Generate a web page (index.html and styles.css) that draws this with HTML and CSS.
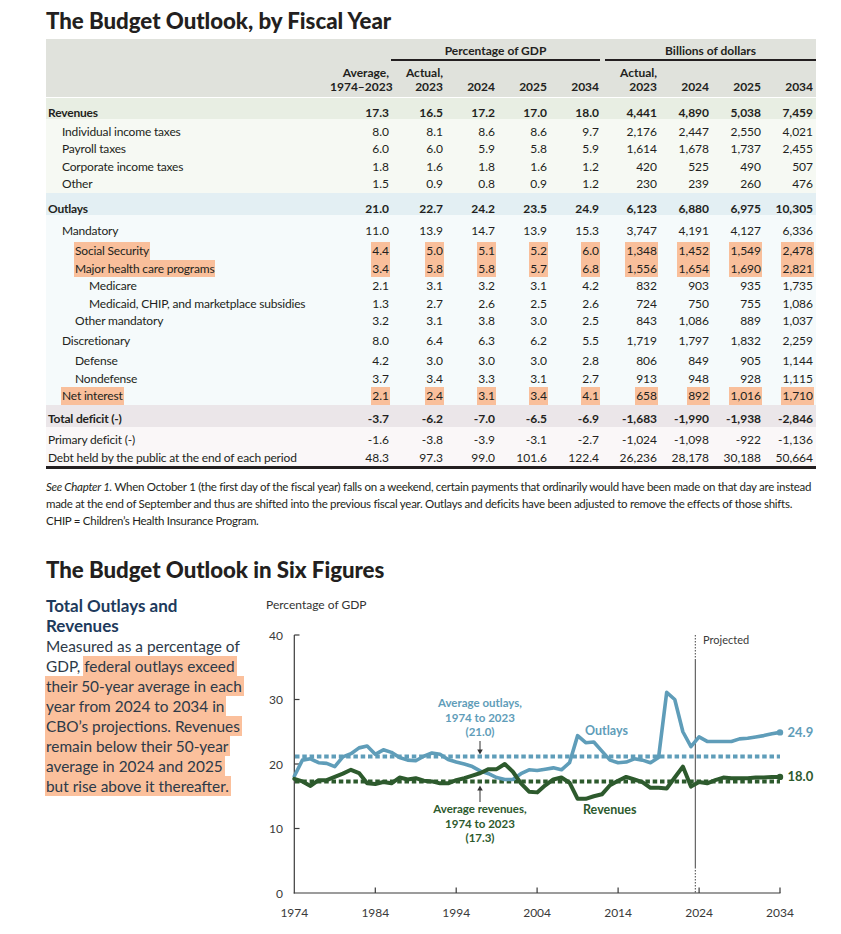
FILE: index.html
```html
<!DOCTYPE html>
<html lang="en">
<head>
<meta charset="utf-8">
<title>The Budget Outlook</title>
<link rel="stylesheet" href="styles.css">
</head>
<body>
<div class="page">
  <h1 class="title">The Budget Outlook, by Fiscal Year</h1>
  <table class="bt">
    <colgroup>
      <col class="c-label"><col class="c-avg"><col class="c-act"><col class="c-y"><col class="c-y"><col class="c-y"><col class="c-act2"><col class="c-y"><col class="c-y"><col class="c-y">
    </colgroup>
    <thead>
      <tr class="h1">
        <th colspan="2"></th>
        <th colspan="4"><div class="grp grp-l">Percentage of GDP</div></th>
        <th colspan="4"><div class="grp grp-r">Billions of dollars</div></th>
      </tr>
      <tr class="h2">
        <th></th>
        <th>Average,<br>1974–2023</th>
        <th>Actual,<br>2023</th>
        <th>2024</th><th>2025</th><th>2034</th>
        <th>Actual,<br>2023</th>
        <th>2024</th><th>2025</th><th>2034</th>
      </tr>
    </thead>
    <tbody class="rev">
      <tr class="band first"><td class="l">Revenues</td><td>17.3</td><td>16.5</td><td>17.2</td><td>17.0</td><td>18.0</td><td>4,441</td><td>4,890</td><td>5,038</td><td>7,459</td></tr>
      <tr class="pt3"><td class="l i1">Individual income taxes</td><td>8.0</td><td>8.1</td><td>8.6</td><td>8.6</td><td>9.7</td><td>2,176</td><td>2,447</td><td>2,550</td><td>4,021</td></tr>
      <tr><td class="l i1">Payroll taxes</td><td>6.0</td><td>6.0</td><td>5.9</td><td>5.8</td><td>5.9</td><td>1,614</td><td>1,678</td><td>1,737</td><td>2,455</td></tr>
      <tr><td class="l i1">Corporate income taxes</td><td>1.8</td><td>1.6</td><td>1.8</td><td>1.6</td><td>1.2</td><td>420</td><td>525</td><td>490</td><td>507</td></tr>
      <tr class="pb"><td class="l i1">Other</td><td>1.5</td><td>0.9</td><td>0.8</td><td>0.9</td><td>1.2</td><td>230</td><td>239</td><td>260</td><td>476</td></tr>
    </tbody>
    <tbody class="out">
      <tr class="band"><td class="l">Outlays</td><td>21.0</td><td>22.7</td><td>24.2</td><td>23.5</td><td>24.9</td><td>6,123</td><td>6,880</td><td>6,975</td><td>10,305</td></tr>
      <tr class="pt7"><td class="l i1">Mandatory</td><td>11.0</td><td>13.9</td><td>14.7</td><td>13.9</td><td>15.3</td><td>3,747</td><td>4,191</td><td>4,127</td><td>6,336</td></tr>
      <tr class="pt2"><td class="l i2"><span class="hl">Social Security</span></td><td><span class="hl">4.4</span></td><td><span class="hl">5.0</span></td><td><span class="hl">5.1</span></td><td><span class="hl">5.2</span></td><td><span class="hl">6.0</span></td><td><span class="hl">1,348</span></td><td><span class="hl">1,452</span></td><td><span class="hl">1,549</span></td><td><span class="hl">2,478</span></td></tr>
      <tr><td class="l i2"><span class="hl">Major health care programs</span></td><td><span class="hl">3.4</span></td><td><span class="hl">5.8</span></td><td><span class="hl">5.8</span></td><td><span class="hl">5.7</span></td><td><span class="hl">6.8</span></td><td><span class="hl">1,556</span></td><td><span class="hl">1,654</span></td><td><span class="hl">1,690</span></td><td><span class="hl">2,821</span></td></tr>
      <tr><td class="l i3">Medicare</td><td>2.1</td><td>3.1</td><td>3.2</td><td>3.1</td><td>4.2</td><td>832</td><td>903</td><td>935</td><td>1,735</td></tr>
      <tr><td class="l i3">Medicaid, CHIP, and marketplace subsidies</td><td>1.3</td><td>2.7</td><td>2.6</td><td>2.5</td><td>2.6</td><td>724</td><td>750</td><td>755</td><td>1,086</td></tr>
      <tr><td class="l i2">Other mandatory</td><td>3.2</td><td>3.1</td><td>3.8</td><td>3.0</td><td>2.5</td><td>843</td><td>1,086</td><td>889</td><td>1,037</td></tr>
      <tr class="pt2"><td class="l i1">Discretionary</td><td>8.0</td><td>6.4</td><td>6.3</td><td>6.2</td><td>5.5</td><td>1,719</td><td>1,797</td><td>1,832</td><td>2,259</td></tr>
      <tr class="pt2"><td class="l i2">Defense</td><td>4.2</td><td>3.0</td><td>3.0</td><td>3.0</td><td>2.8</td><td>806</td><td>849</td><td>905</td><td>1,144</td></tr>
      <tr><td class="l i2">Nondefense</td><td>3.7</td><td>3.4</td><td>3.3</td><td>3.1</td><td>2.7</td><td>913</td><td>948</td><td>928</td><td>1,115</td></tr>
      <tr><td class="l i1"><span class="hl">Net interest</span></td><td><span class="hl">2.1</span></td><td><span class="hl">2.4</span></td><td><span class="hl">3.1</span></td><td><span class="hl">3.4</span></td><td><span class="hl">4.1</span></td><td><span class="hl">658</span></td><td><span class="hl">892</span></td><td><span class="hl">1,016</span></td><td><span class="hl">1,710</span></td></tr>
    </tbody>
    <tbody class="def">
      <tr class="band band-def"><td class="l">Total deficit (-)</td><td>-3.7</td><td>-6.2</td><td>-7.0</td><td>-6.5</td><td>-6.9</td><td>-1,683</td><td>-1,990</td><td>-1,938</td><td>-2,846</td></tr>
      <tr class="pt4"><td class="l">Primary deficit (-)</td><td>-1.6</td><td>-3.8</td><td>-3.9</td><td>-3.1</td><td>-2.7</td><td>-1,024</td><td>-1,098</td><td>-922</td><td>-1,136</td></tr>
      <tr class="last"><td class="l">Debt held by the public at the end of each period</td><td>48.3</td><td>97.3</td><td>99.0</td><td>101.6</td><td>122.4</td><td>26,236</td><td>28,178</td><td>30,188</td><td>50,664</td></tr>
    </tbody>
  </table>
  <p class="note"><em>See Chapter 1.</em> When October 1 (the first day of the fiscal year) falls on a weekend, certain payments that ordinarily would have been made on that day are instead<br>made at the end of September and thus are shifted into the previous fiscal year. Outlays and deficits have been adjusted to remove the effects of those shifts.<br>CHIP = Children’s Health Insurance Program.</p>

  <h2 class="title title2">The Budget Outlook in Six Figures</h2>
  <div class="fig">
    <div class="side">
      <h3 class="side-h">Total Outlays and<br>Revenues</h3>
      <p class="side-p">Measured as a percentage of<br>GDP, <span class="mark">federal outlays exceed<br>their 50-year average in each<br>year from 2024 to 2034 in<br>CBO’s projections. Revenues<br>remain below their 50-year<br>average in 2024 and 2025<br>but rise above it thereafter.</span></p>
    </div>
    <svg class="chart" width="580" height="335" viewBox="250 595 580 335" xmlns="http://www.w3.org/2000/svg">
      <text class="ax-title" x="266" y="609.5">Percentage of GDP</text>
      <g class="ylab">
        <text x="283" y="640.5">40</text>
        <text x="283" y="705">30</text>
        <text x="283" y="769.5">20</text>
        <text x="283" y="834">10</text>
        <text x="283" y="898.5">0</text>
      </g>
      <g class="axis">
        <line x1="294.3" y1="636" x2="294.3" y2="894.6"/>
        <line x1="293.7" y1="894" x2="780.5" y2="894"/>
        <line x1="294.3" y1="636" x2="299.5" y2="636"/>
        <line x1="294.3" y1="700.5" x2="299.5" y2="700.5"/>
        <line x1="294.3" y1="765" x2="299.5" y2="765"/>
        <line x1="294.3" y1="829.5" x2="299.5" y2="829.5"/>
        <line x1="375.3" y1="894" x2="375.3" y2="888.5"/>
        <line x1="456.2" y1="894" x2="456.2" y2="888.5"/>
        <line x1="537.1" y1="894" x2="537.1" y2="888.5"/>
        <line x1="618.1" y1="894" x2="618.1" y2="888.5"/>
        <line x1="699.1" y1="894" x2="699.1" y2="888.5"/>
        <line x1="780" y1="894" x2="780" y2="888.5"/>
      </g>
      <g class="xlab">
        <text x="294.3" y="918">1974</text>
        <text x="375.3" y="918">1984</text>
        <text x="456.2" y="918">1994</text>
        <text x="537.1" y="918">2004</text>
        <text x="618.1" y="918">2014</text>
        <text x="699.1" y="918">2024</text>
        <text x="780" y="918">2034</text>
      </g>
      <line class="proj-dot" x1="695.3" y1="636" x2="695.3" y2="660"/>
      <line class="proj" x1="695.3" y1="660" x2="695.3" y2="868"/>
      <line class="proj-dot" x1="695.3" y1="868" x2="695.3" y2="894"/>
      <text class="proj-t" x="703" y="645">Projected</text>

      <line class="avg-out" x1="295" y1="757.6" x2="780" y2="757.6"/>
      <line class="avg-rev" x1="295" y1="782.4" x2="780" y2="782.4"/>

      <g transform="translate(294.3 894) scale(8.095 -6.45)">
        <polyline class="l-out" points="0,18.1 1,20.6 2,20.8 3,20.2 4,20.1 5,19.6 6,21.1 7,21.6 8,22.5 9,22.8 10,21.5 11,22.2 12,21.8 13,21.0 14,20.6 15,20.5 16,21.2 17,21.7 18,21.5 19,20.7 20,20.3 21,20.0 22,19.6 23,18.9 24,18.5 25,17.9 26,17.6 27,17.6 28,18.5 29,19.1 30,19.0 31,19.2 32,19.4 33,19.1 34,20.2 35,24.4 36,23.3 37,23.4 38,22.0 39,20.6 40,20.2 41,20.3 42,20.8 43,20.6 44,20.2 45,21.0 46,31.1 47,30.0 48,25.0 49,22.7 50,24.2 51,23.5 52,23.5 53,23.5 54,23.5 55,23.9 56,24.0 57,24.2 58,24.4 59,24.7 60,24.9"/>
        <polyline class="l-rev" points="0,17.7 1,17.3 2,16.6 3,17.5 4,17.5 5,18.0 6,18.5 7,19.1 8,18.6 9,17.0 10,16.9 11,17.2 12,17.0 13,17.9 14,17.6 15,17.8 16,17.4 17,17.3 18,17.0 19,17.0 20,17.5 21,17.8 22,18.2 23,18.6 24,19.2 25,19.2 26,20.0 27,18.8 28,17.0 29,15.7 30,15.6 31,16.7 32,17.6 33,17.9 34,17.1 35,14.6 36,14.6 37,15.0 38,15.3 39,16.7 40,17.4 41,18.0 42,17.6 43,17.2 44,16.3 45,16.3 46,16.2 47,17.9 48,19.6 49,16.5 50,17.2 51,17.0 52,17.5 53,17.9 54,17.8 55,17.8 56,17.8 57,17.9 58,17.9 59,18.0 60,18.0"/>
      </g>
      <circle class="dot-out" cx="780" cy="733.4" r="3.2"/>
      <circle class="dot-rev" cx="780" cy="777.9" r="3.2"/>
      <text class="end-out" x="787.5" y="737.5">24.9</text>
      <text class="end-rev" x="787.5" y="782">18.0</text>

      <text class="lbl-out" x="585" y="736">Outlays</text>
      <text class="lbl-rev" x="583" y="815">Revenues</text>

      <g class="ann-out">
        <text x="480" y="708.3">Average outlays,</text>
        <text x="480" y="722.8">1974 to 2023</text>
        <text x="480" y="737.3">(21.0)</text>
      </g>
      <g class="ann-rev">
        <text x="480" y="814">Average revenues,</text>
        <text x="480" y="828.6">1974 to 2023</text>
        <text x="480" y="843.2">(17.3)</text>
      </g>
      <line class="arrow" x1="480" y1="742" x2="480" y2="752"/>
      <path class="arrow-h" d="M477.2 750.5 L480 755.5 L482.8 750.5 Z"/>
      <line class="arrow" x1="480" y1="803" x2="480" y2="790"/>
      <path class="arrow-h" d="M477.2 791.5 L480 786.5 L482.8 791.5 Z"/>
    </svg>
  </div>
</div>
</body>
</html>
```
FILE: styles.css
```css
* { box-sizing: border-box; }
html, body { margin: 0; padding: 0; background: #fff; }
body {
  font-family: "Lato", "Liberation Sans", sans-serif;
  color: #231f20;
}
.page { padding: 9px 25px 0 46px; }

.title {
  margin: 0;
  font-size: 22.3px;
  line-height: 24px;
  font-weight: 900;
  color: #231f20;
  letter-spacing: -0.05px;
}

/* ---------- table ---------- */
.bt {
  margin-top: 6px;
  width: 770px;
  table-layout: fixed;
  border-collapse: collapse;
  font-size: 12px;
}
.c-label { width: 284px; }
.c-avg { width: 62px; }
.c-act { width: 54px; }
.c-y { width: 52px; }
.c-act2 { width: 58px; }

.bt th {
  background: #e0e2dc;
  font-weight: 700;
  text-align: right;
  padding: 0 3px 0 0;
  white-space: nowrap;
}
.bt .h1 th { padding: 4px 0 0 0; vertical-align: top; }
.grp {
  text-align: center;
  line-height: 16px;
  border-bottom: 2px solid #231f20;
}
.grp-l { margin: 0 2px 0 -1px; }
.grp-r { margin: 0 0 0 3px; }
.bt .h2 th {
  line-height: 13.5px;
  padding-top: 5px;
  padding-bottom: 4px;
  vertical-align: bottom;
}

.bt td {
  padding: 0 3px 0 0;
  line-height: 17.5px;
  text-align: right;
  white-space: nowrap;
  vertical-align: bottom;
}
.bt td.l { text-align: left; padding-left: 2px; letter-spacing: -0.18px; }
.bt td.i1 { padding-left: 16px; }
.bt td.i2 { padding-left: 29px; }
.bt td.i3 { padding-left: 43px; }

.rev td { background: #f6f9f3; }
.out td { background: #f5fafb; }
.def td { background: #faf7f8; }

.bt .band td {
  font-weight: 700;
  line-height: 13px;
  padding-top: 8.5px;
  padding-bottom: 0.5px;
}
.rev .band td { background: #e8eee3; }
.out .band td { background: #e3eff3; }
.def .band td { background: #ebe6e9; padding-top: 7px; padding-bottom: 2.5px; }
.bt .band.first td { border-top: 1px solid #fff; padding-top: 8px; padding-bottom: 0; }

.bt .pt3 td { padding-top: 3.5px; }
.bt .pt7 td { padding-top: 7px; }
.bt .pt2 td { padding-top: 2.5px; }
.bt .pt4 td { padding-top: 4px; }
.bt .pb td { padding-bottom: 0.5px; }
.bt .last td { border-bottom: 3px solid #231f20; }

.hl {
  display: inline-block;
  background: #f9bf9b;
  padding: 0 1px;
  margin-right: -1px;
  line-height: 17.5px;
}
td.l .hl { margin-left: -1px; }

/* ---------- note ---------- */
.note {
  margin: 9px 0 0 0;
  font-size: 11.5px;
  line-height: 17px;
  white-space: nowrap;
  letter-spacing: -0.28px;
  color: #231f20;
}
.note em { font-style: italic; }

/* ---------- figure ---------- */
.title2 { margin-top: 29px; }
.fig {
  display: flex;
  gap: 4px;
  margin-top: 12px;
}
.side { width: 200px; flex: none; padding-top: 2px; }
.side-h {
  margin: 0;
  font-size: 17px;
  line-height: 20px;
  font-weight: 700;
  color: #1d3a5c;
}
.side-p {
  margin: 0;
  font-size: 15.4px;
  line-height: 20px;
  color: #2d3a48;
  white-space: nowrap;
}
.mark {
  background: #fbc09c;
  padding: 1px 2px 1px 0;
  margin-left: -1px;
  padding-left: 1px;
  -webkit-box-decoration-break: clone;
  box-decoration-break: clone;
}
.chart { display: block; flex: none; }
.chart text { font-family: "Lato", "Liberation Sans", sans-serif; }
.ax-title { font-size: 12px; fill: #333; }
.ylab text { font-size: 12px; fill: #3a3a3a; text-anchor: end; }
.xlab text { font-size: 12px; fill: #3a3a3a; text-anchor: middle; }
.axis line { stroke: #3a3a3a; stroke-width: 1.2; }
.proj { stroke: #444; stroke-width: 1; }
.proj-dot { stroke: #444; stroke-width: 1; stroke-dasharray: 1.5 1.5; }
.proj-t { font-size: 11px; fill: #3a3a3a; }

.avg-out { stroke: #5f9db9; stroke-width: 4; stroke-dasharray: 4.5 2.8; }
.avg-rev { stroke: #2d5a2d; stroke-width: 4; stroke-dasharray: 4.5 2.8; }
.l-out, .l-rev { fill: none; stroke-linejoin: round; stroke-linecap: round; vector-effect: non-scaling-stroke; }
.l-out { stroke: #5f9db9; stroke-width: 3.6; }
.l-rev { stroke: #2d5a2d; stroke-width: 4; }
.dot-out { fill: #5f9db9; }
.dot-rev { fill: #2d5a2d; }
.end-out { font-size: 13px; font-weight: 700; fill: #5f9db9; }
.end-rev { font-size: 13px; font-weight: 700; fill: #2d5a2d; }
.lbl-out { font-size: 12.5px; font-weight: 700; fill: #5f9db9; }
.lbl-rev { font-size: 12.5px; font-weight: 700; fill: #2d5a2d; }
.ann-out text { font-size: 11.5px; font-weight: 700; fill: #5f9db9; text-anchor: middle; }
.ann-rev text { font-size: 11.5px; font-weight: 700; fill: #2d5a2d; text-anchor: middle; }
.arrow { stroke: #333; stroke-width: 1; }
.arrow-h { fill: #333; }
```
